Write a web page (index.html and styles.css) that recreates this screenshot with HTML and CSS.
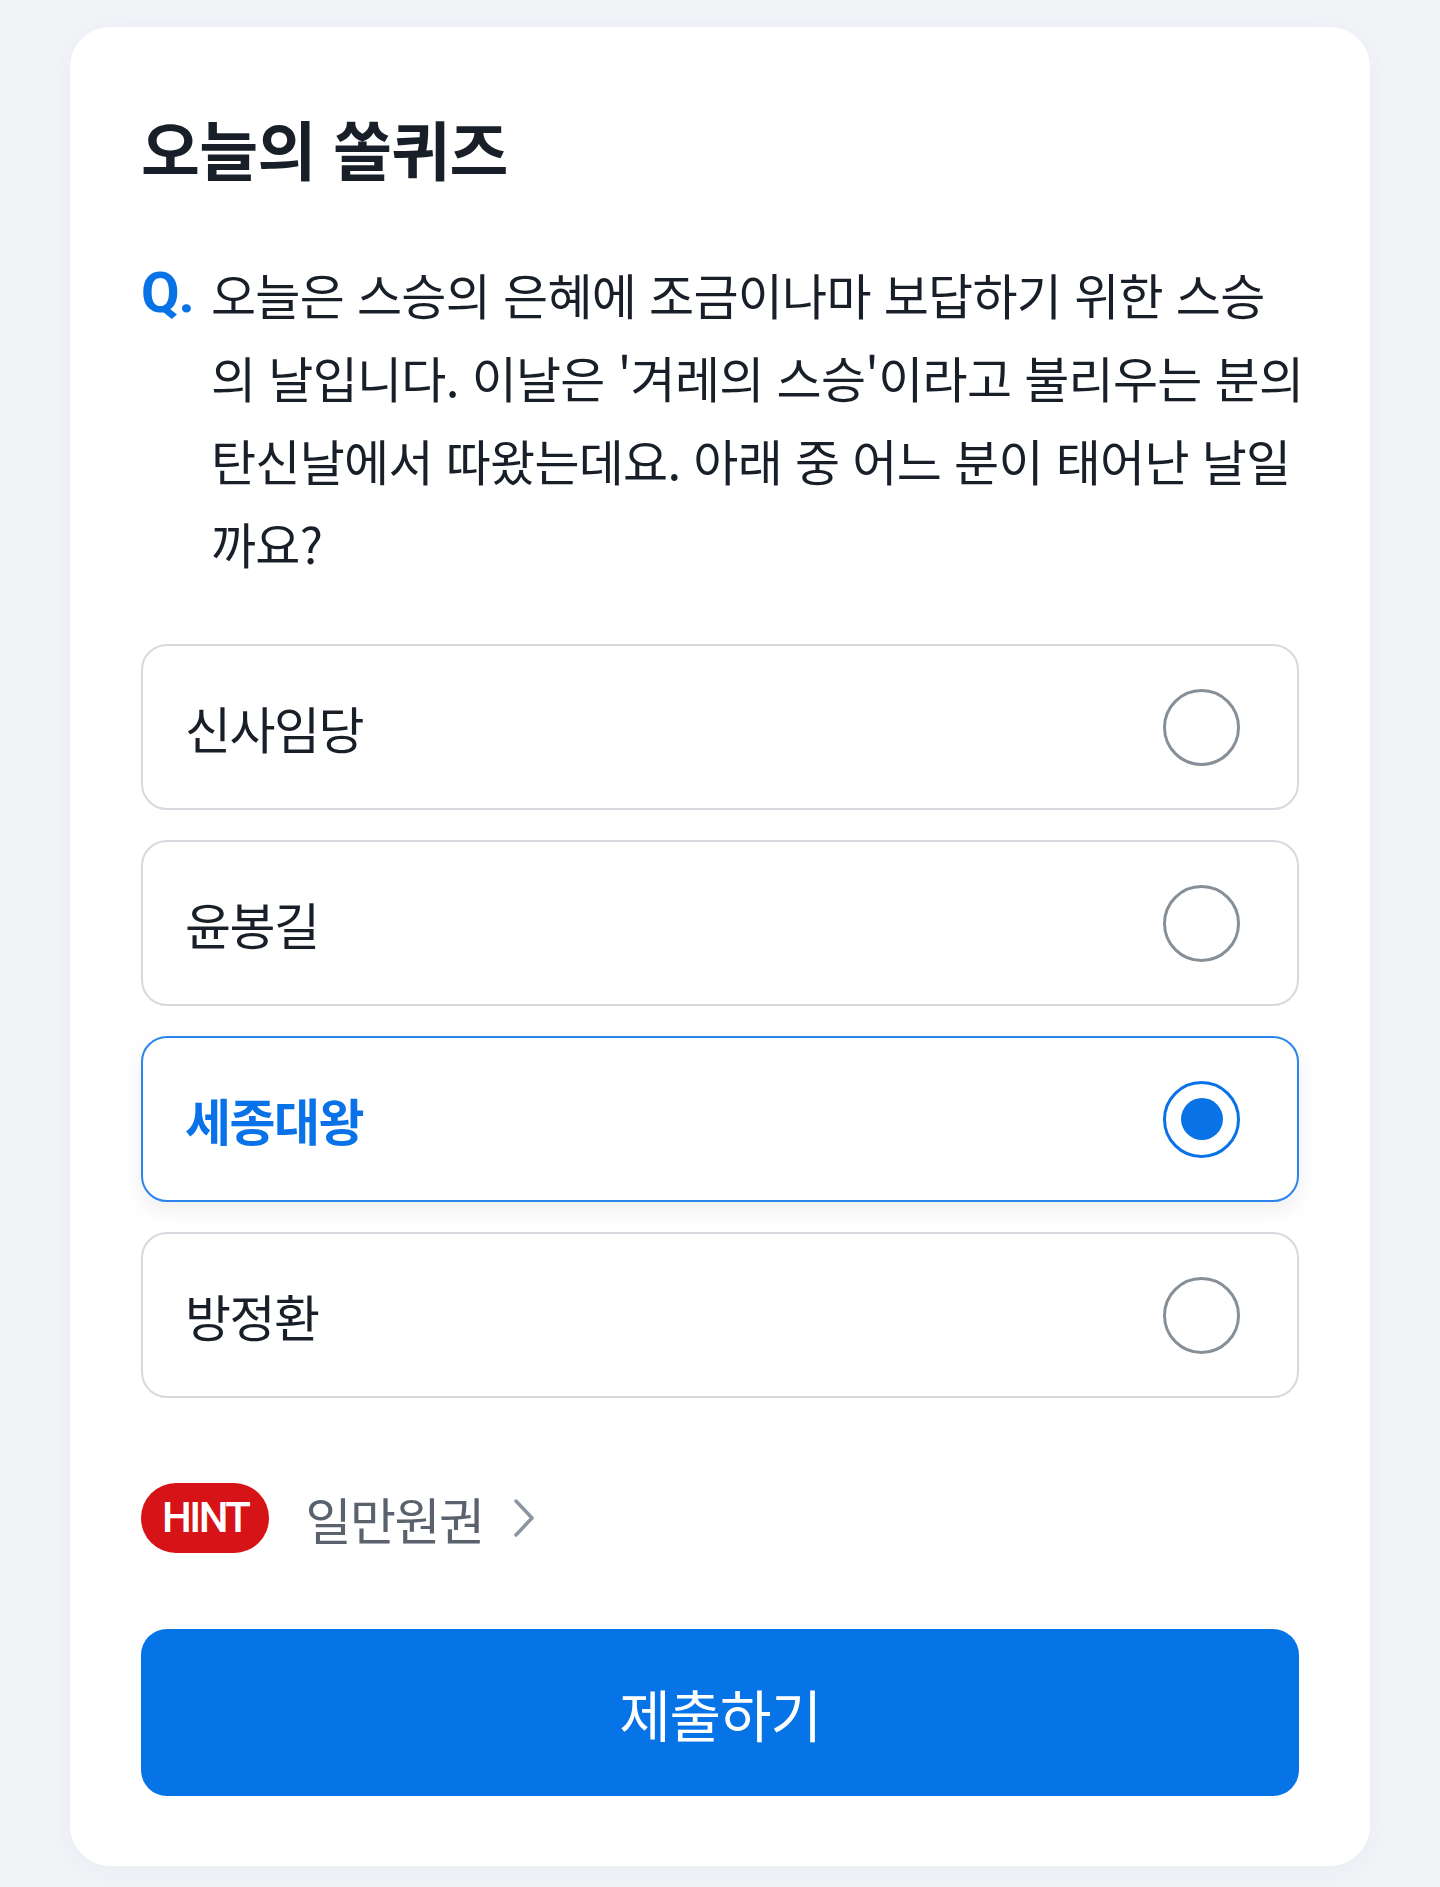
FILE: index.html
```html
<!DOCTYPE html>
<html lang="ko">
<head>
    <meta charset="UTF-8">
    <meta name="viewport" content="width=device-width, initial-scale=1.0">
    <title>오늘의 쏠퀴즈</title>
    <link rel="stylesheet" href="styles.css">
</head>
<body>
    <div class="quiz-card">
        <h2 class="quiz-title">오늘의 쏠퀴즈</h2>

        <div class="question">
            <span class="question-mark">Q.</span>
            <p class="question-text">오늘은 스승의 은혜에 조금이나마 보답하기 위한 스승<br>의 날입니다. 이날은 '겨레의 스승'이라고 불리우는 분의<br>탄신날에서 따왔는데요. 아래 중 어느 분이 태어난 날일<br>까요?</p>
        </div>

        <div class="options">
            <div class="option">
                <span>신사임당</span>
                <span class="radio"></span>
            </div>
            <div class="option">
                <span>윤봉길</span>
                <span class="radio"></span>
            </div>
            <div class="option selected">
                <span>세종대왕</span>
                <span class="radio"></span>
            </div>
            <div class="option">
                <span>방정환</span>
                <span class="radio"></span>
            </div>
        </div>

        <div class="hint">
            <span class="hint-badge">HINT</span>
            <span class="hint-text">일만원권</span>
            <svg class="hint-arrow" width="22" height="40" viewBox="0 0 22 40">
                <path d="M3 3 L19 20 L3 37" fill="none" stroke="#8b95a1" stroke-width="3.5" stroke-linecap="round" stroke-linejoin="round"/>
            </svg>
        </div>

        <button class="submit-button">제출하기</button>
    </div>
</body>
</html>
```

FILE: styles.css
```css
body {
    margin: 0;
    padding: 27px 70px 21px;
    background: #f2f4f8;
    font-family: "Noto Sans CJK KR", sans-serif;
    color: #191f28;
}

.quiz-card {
    background: white;
    border-radius: 40px;
    padding: 75px 71px 70px;
    box-shadow: 0 4px 30px rgba(30, 50, 90, 0.05);
}

.quiz-title {
    margin: 0;
    font-size: 64px;
    line-height: 90px;
    font-weight: 700;
    letter-spacing: -0.01em;
}

.question {
    display: flex;
    margin: 60px 0;
    font-size: 49px;
    line-height: 83px;
}

.question-mark {
    flex: 0 0 70px;
    font-family: Roboto, sans-serif;
    font-size: 56px;
    font-weight: 700;
    color: #0873e7;
    letter-spacing: -0.02em;
}

.question-text {
    margin: 0;
    flex: 1;
    white-space: nowrap;
    letter-spacing: -0.015em;
}

.options {
    display: flex;
    flex-direction: column;
    gap: 30px;
}

.option {
    display: flex;
    align-items: center;
    justify-content: space-between;
    box-sizing: border-box;
    height: 166px;
    padding: 0 57px 0 42px;
    border: 2px solid #d6d9de;
    border-radius: 26px;
    font-size: 50px;
    letter-spacing: -0.03em;
}

.option.selected {
    border-color: #2b84ea;
    color: #0a72e8;
    font-weight: 700;
    box-shadow: 0 8px 22px rgba(0, 0, 0, 0.07);
}

.radio {
    display: flex;
    align-items: center;
    justify-content: center;
    box-sizing: border-box;
    width: 77px;
    height: 77px;
    border: 3px solid #878f98;
    border-radius: 50%;
}

.option.selected .radio {
    border-color: #0a72e8;
}

.option.selected .radio::after {
    content: "";
    width: 42px;
    height: 42px;
    border-radius: 50%;
    background: #0872e6;
}

.hint {
    display: flex;
    align-items: center;
    margin-top: 85px;
    height: 70px;
}

.hint-badge {
    height: 70px;
    line-height: 70px;
    padding: 0 21px;
    border-radius: 35px;
    background: #d61317;
    color: white;
    font-family: Roboto, sans-serif;
    font-size: 42px;
    font-weight: 500;
    letter-spacing: -0.06em;
}

.hint-text {
    margin-left: 36px;
    font-size: 50px;
    line-height: 70px;
    color: #5a626d;
    letter-spacing: -0.03em;
}

.hint-arrow {
    margin-left: 30px;
}

.submit-button {
    display: block;
    width: 100%;
    height: 167px;
    margin-top: 76px;
    border: none;
    border-radius: 26px;
    background: #0673e6;
    color: white;
    font-family: inherit;
    font-size: 56px;
    letter-spacing: -0.02em;
    cursor: pointer;
}
```
